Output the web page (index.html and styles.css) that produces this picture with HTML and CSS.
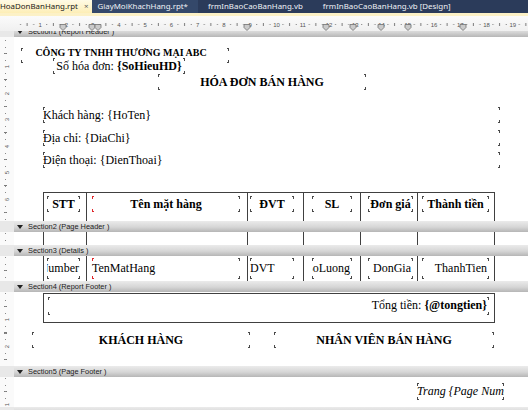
FILE: index.html
```html
<!DOCTYPE html>
<html>
<head>
<meta charset="utf-8">
<link rel="stylesheet" href="styles.css">
</head>
<body>
<div class="app">
  <div class="tabbar">
    <div class="tab active"><span>HoaDonBanHang.rpt</span><span class="close">×</span></div>
    <div class="tab hov">GiayMoiKhachHang.rpt*</div>
    <div class="tab">frmInBaoCaoBanHang.vb</div>
    <div class="tab">frmInBaoCaoBanHang.vb [Design]</div>
  </div>
  <div class="tabstrip"></div>
  <div class="hruler">
    <div class="hr-corner"></div>
    <svg class="hr-svg" width="514" height="15" viewBox="0 0 514 15">
      <defs>
        <pattern id="rt" patternUnits="userSpaceOnUse" width="26.25" height="15">
          <rect x="6" y="8" width="1" height="1" fill="#7a7a7a"/>
          <rect x="12.6" y="7" width="1" height="3" fill="#7a7a7a"/>
          <rect x="19.2" y="8" width="1" height="1" fill="#7a7a7a"/>
        </pattern>
        <path id="mk" d="M-3 0.5H3V3.5L0 6.5L-3 3.5Z" fill="#cacaca" stroke="#707070" stroke-width="0.8"/>
      </defs>
      <rect width="514" height="15" fill="url(#rt)"/>
      <g class="rnum" text-anchor="middle">
        <text x="26.25" y="10.5">1</text>
        <text x="52.5" y="10.5">2</text>
        <text x="78.75" y="10.5">3</text>
        <text x="105" y="10.5">4</text>
        <text x="131.25" y="10.5">5</text>
        <text x="157.5" y="10.5">6</text>
        <text x="183.75" y="10.5">7</text>
        <text x="210" y="10.5">8</text>
        <text x="236.25" y="10.5">9</text>
        <text x="262.5" y="10.5">10</text>
        <text x="288.75" y="10.5">11</text>
        <text x="315" y="10.5">12</text>
        <text x="341.25" y="10.5">13</text>
        <text x="367.5" y="10.5">14</text>
        <text x="393.75" y="10.5">15</text>
        <text x="420" y="10.5">16</text>
        <text x="446.25" y="10.5">17</text>
        <text x="472.5" y="10.5">18</text>
        <text x="498.75" y="10.5">19</text>
      </g>
      <use href="#mk" x="49" y="8"/>
      <use href="#mk" x="78" y="8"/>
      <use href="#mk" x="84" y="8"/>
      <use href="#mk" x="233" y="8"/>
      <use href="#mk" x="312" y="8"/>
      <use href="#mk" x="339" y="8"/>
      <use href="#mk" x="367" y="8"/>
      <use href="#mk" x="394" y="8"/>
      <use href="#mk" x="449" y="8"/>
    </svg>
  </div>

  <div class="viewport">
    <div class="canvas">
      <div class="band"><div class="bl"></div><div class="bb"><svg class="tri" width="6" height="4" viewBox="0 0 6 4"><path d="M0 0H6L3 4Z"/></svg><span>Section1 (Report Header )</span></div></div>
      <div class="sec s1">
        <div class="vr o3"><div class="vnums"><b><span>1</span></b><b><span>2</span></b><b><span>3</span></b><b><span>4</span></b><b><span>5</span></b><b><span>6</span></b></div></div>
        <div class="page">
          <div class="fld f-company">CÔNG TY TNHH THƯƠNG MẠI ABC</div>
          <div class="fld f-sohd">Số hóa đơn: <b>{SoHieuHD}</b></div>
          <div class="fld f-title">HÓA ĐƠN BÁN HÀNG</div>
          <div class="fld f-cust r1">Khách hàng: {HoTen}</div>
          <div class="fld f-cust r2">Địa chỉ: {DiaChi}</div>
          <div class="fld f-cust r3">Điện thoại: {DienThoai}</div>
          <div class="trow head">
            <div class="c1"><div class="fld hf">STT</div></div>
            <div class="c2"><div class="fld hf red">Tên mặt hàng</div></div>
            <div class="c3"><div class="fld hf">ĐVT</div></div>
            <div class="c4"><div class="fld hf">SL</div></div>
            <div class="c5"><div class="fld hf">Đơn giá</div></div>
            <div class="c6"><div class="fld hf">Thành tiền</div></div>
          </div>
        </div>
      </div>

      <div class="band"><div class="bl"></div><div class="bb"><svg class="tri" width="6" height="4" viewBox="0 0 6 4"><path d="M0 0H6L3 4Z"/></svg><span>Section2 (Page Header )</span></div></div>
      <div class="sec s2">
        <div class="vr o1"></div>
        <div class="page">
          <div class="trow mid">
            <div class="c1"></div><div class="c2"></div><div class="c3"></div><div class="c4"></div><div class="c5"></div><div class="c6"></div>
          </div>
        </div>
      </div>

      <div class="band"><div class="bl"></div><div class="bb"><svg class="tri" width="6" height="4" viewBox="0 0 6 4"><path d="M0 0H6L3 4Z"/></svg><span>Section3 (Details )</span></div></div>
      <div class="sec s3">
        <div class="vr o1"></div>
        <div class="page">
          <div class="trow det">
            <div class="c1"><div class="fld df rt n1"><span>Number</span></div></div>
            <div class="c2"><div class="fld df red">TenMatHang</div></div>
            <div class="c3"><div class="fld df">DVT</div></div>
            <div class="c4"><div class="fld df rt"><span>SoLuong</span></div></div>
            <div class="c5"><div class="fld df rt"><span>DonGia</span></div></div>
            <div class="c6"><div class="fld df rt"><span>ThanhTien</span></div></div>
          </div>
        </div>
      </div>

      <div class="band"><div class="bl"></div><div class="bb"><svg class="tri" width="6" height="4" viewBox="0 0 6 4"><path d="M0 0H6L3 4Z"/></svg><span>Section4 (Report Footer )</span></div></div>
      <div class="sec s4">
        <div class="vr o1"><div class="vnums"><b><span>1</span></b><b><span>2</span></b></div></div>
        <div class="page">
          <div class="totalbox">
            <div class="fld f-total">Tổng tiền: <b>{@tongtien}</b></div>
          </div>
          <div class="signs">
            <div class="fld f-sign s-kh">KHÁCH HÀNG</div>
            <div class="fld f-sign s-nv">NHÂN VIÊN BÁN HÀNG</div>
          </div>
        </div>
      </div>

      <div class="band"><div class="bl"></div><div class="bb"><svg class="tri" width="6" height="4" viewBox="0 0 6 4"><path d="M0 0H6L3 4Z"/></svg><span>Section5 (Page Footer )</span></div></div>
      <div class="sec s5">
        <div class="vr o1"><div class="vnums"><b><span>1</span></b></div></div>
        <div class="page">
          <div class="fld f-page"><span>Trang {Page Number}</span></div>
        </div>
      </div>

      <div class="band"><div class="bl"></div><div class="bb"></div></div>
    </div>
  </div>
</div>
</body>
</html>
```

FILE: styles.css
```css
* { box-sizing: border-box; }
html, body { margin: 0; padding: 0; width: 528px; height: 410px; overflow: hidden; background: #fff; }

.app { width: 528px; height: 410px; display: flex; flex-direction: column; }

/* document tabs */
.tabbar {
  height: 13px; flex: none; display: flex; background: #2b3b5a;
  font: 7.9px/13px "Noto Sans", sans-serif; color: #eef1f6; white-space: nowrap; overflow: hidden;
}
.tab { padding: 0 10px; }
.tab.active {
  display: flex; gap: 6px; padding: 0 4px 0 0;
  background: linear-gradient(#fffbe6, #fdeeb6); color: #1b1b1b;
}
.tab.active .close { color: #5a5a5a; }
.tab.hov { padding-left: 5px; background: #34486a; }
.tabstrip { height: 3px; flex: none; background: #fcf1c6; }

/* horizontal ruler */
.hruler { height: 15px; flex: none; display: flex; background: linear-gradient(#fbfbfb, #f0f0f0); }
.hr-corner { width: 14px; flex: none; }
.hr-svg { display: block; }
.rnum { font-family: "Liberation Sans", sans-serif; font-size: 6px; fill: #555; }

/* design surface */
.viewport { flex: 1; overflow: hidden; }
.canvas { margin-top: -5px; display: flex; flex-direction: column; }

.band { height: 11px; flex: none; display: flex; }
.band .bl { width: 14px; flex: none; background: #e8e8e8; }
.band .bb {
  flex: 1; display: flex; align-items: center; gap: 5px; padding-left: 3px;
  background: linear-gradient(#ebebeb, #d6d6d6 55%, #b6b6b6);
  font: 7.4px/1 "Liberation Sans", sans-serif; color: #1a1a1a; white-space: nowrap;
}
.tri { display: block; fill: #222; }

.sec { display: flex; flex: none; overflow: hidden; }
.s1 { height: 184px; }
.s2 { height: 13px; }
.s3 { height: 25px; }
.s4 { height: 74px; }
.s5 { height: 30px; }

/* vertical ruler */
.vr {
  width: 14px; flex: none; overflow: hidden; background-color: #fafafa;
  background-image:
    repeating-linear-gradient(to bottom, #8a8a8a 0 1px, transparent 1px 6.625px),
    repeating-linear-gradient(to bottom, #7a7a7a 0 1px, transparent 1px 26.5px);
  background-size: 1px 100%, 3px 100%;
  background-repeat: no-repeat;
}
.vr.o1 { background-position: 5px 1px, 4px 14.25px; }
.vr.o3 { background-position: 5px 3px, 4px 16.25px; }
.vnums { display: flex; flex-direction: column; }
.vr.o1 .vnums { padding-top: 24px; }
.vr.o3 .vnums { padding-top: 26px; }
.vnums b { height: 26.5px; flex: none; display: flex; justify-content: center; font: 6px/7px "Liberation Sans", sans-serif; color: #555; }
.vnums b span { display: block; width: 7px; height: 7px; text-align: center; background: #fafafa; transform: rotate(-90deg); }

.page { flex: 1; min-width: 0; background: #fff; font-family: "Liberation Serif", serif; font-size: 12px; color: #000; }

/* report fields with corner marks */
.fld {
  --c: #4a4a4a;
  --l: #4a4a4a;
  white-space: nowrap;
  background:
    linear-gradient(var(--l), var(--l)) left top / 1px 3px,
    linear-gradient(var(--l), var(--l)) left top / 2px 1px,
    linear-gradient(var(--c), var(--c)) right top / 1px 3px,
    linear-gradient(var(--c), var(--c)) right top / 2px 1px,
    linear-gradient(var(--l), var(--l)) left bottom / 1px 3px,
    linear-gradient(var(--l), var(--l)) left bottom / 2px 1px,
    linear-gradient(var(--c), var(--c)) right bottom / 1px 3px,
    linear-gradient(var(--c), var(--c)) right bottom / 2px 1px;
  background-repeat: no-repeat;
}
.fld.red { --l: #e0282c; }
.fld.rt { display: flex; justify-content: flex-end; overflow: hidden; padding-right: 2px; }
.fld.rt span { flex: none; }
.fld.n1 { padding-right: 1px; }

.f-company { margin: 11px 0 0 7px; width: 208px; height: 15px; padding-right: 8px; font-size: 10px; line-height: 10px; font-weight: bold; text-align: center; }
.f-sohd { margin: -5px 0 0 39px; width: 132px; height: 16px; line-height: 16px; text-align: center; }
.f-title { margin: 0 0 0 144px; width: 208px; height: 16px; line-height: 16px; text-align: center; font-weight: bold; }
.f-cust { margin-left: 29px; width: 457px; height: 16px; line-height: 16px; }
.f-cust.r1 { margin-top: 17px; }
.f-cust.r2 { margin-top: 7px; }
.f-cust.r3 { margin-top: 6px; }

/* table grid */
.trow { display: grid; grid-template-columns: 43px 161px 56px 57px 57px 78px; width: 452px; margin-left: 29px; }
.trow > div { border-left: 1px solid #404040; min-width: 0; }
.trow > div:last-child { border-right: 1px solid #404040; }
.trow.head { margin-top: 24px; height: 29px; border-top: 1px solid #404040; }
.trow.head > div { padding-top: 3px; }
.trow.mid { height: 13px; }
.trow.det { height: 25px; }
.trow.det > div { padding-top: 2px; }
.c1 { padding-left: 3px; padding-right: 6px; }
.c2 { padding-left: 5px; padding-right: 7px; }
.c3 { padding-left: 2px; padding-right: 9px; }
.c4 { padding-left: 8px; padding-right: 8px; }
.c5 { padding-left: 7px; padding-right: 4px; }
.c6 { padding-left: 4px; padding-right: 5px; }
.hf { height: 16px; line-height: 16px; text-align: center; font-weight: bold; }
.df { height: 21px; line-height: 21px; }

/* report footer */
.totalbox { margin: 1px 0 0 29px; width: 452px; height: 30px; border: 1px solid #404040; padding: 3px 5px 0 4px; }
.f-total { height: 18px; line-height: 16px; text-align: right; padding-right: 2px; }
.signs { display: flex; gap: 24px; margin: 9px 0 0 18px; }
.f-sign { height: 16px; line-height: 16px; text-align: center; font-weight: bold; }
.s-kh { width: 218px; }
.s-nv { width: 220px; }

/* page footer */
.f-page { margin: 6px 0 0 403px; width: 87px; height: 17px; line-height: 17px; font-style: italic; overflow: hidden; }
```
